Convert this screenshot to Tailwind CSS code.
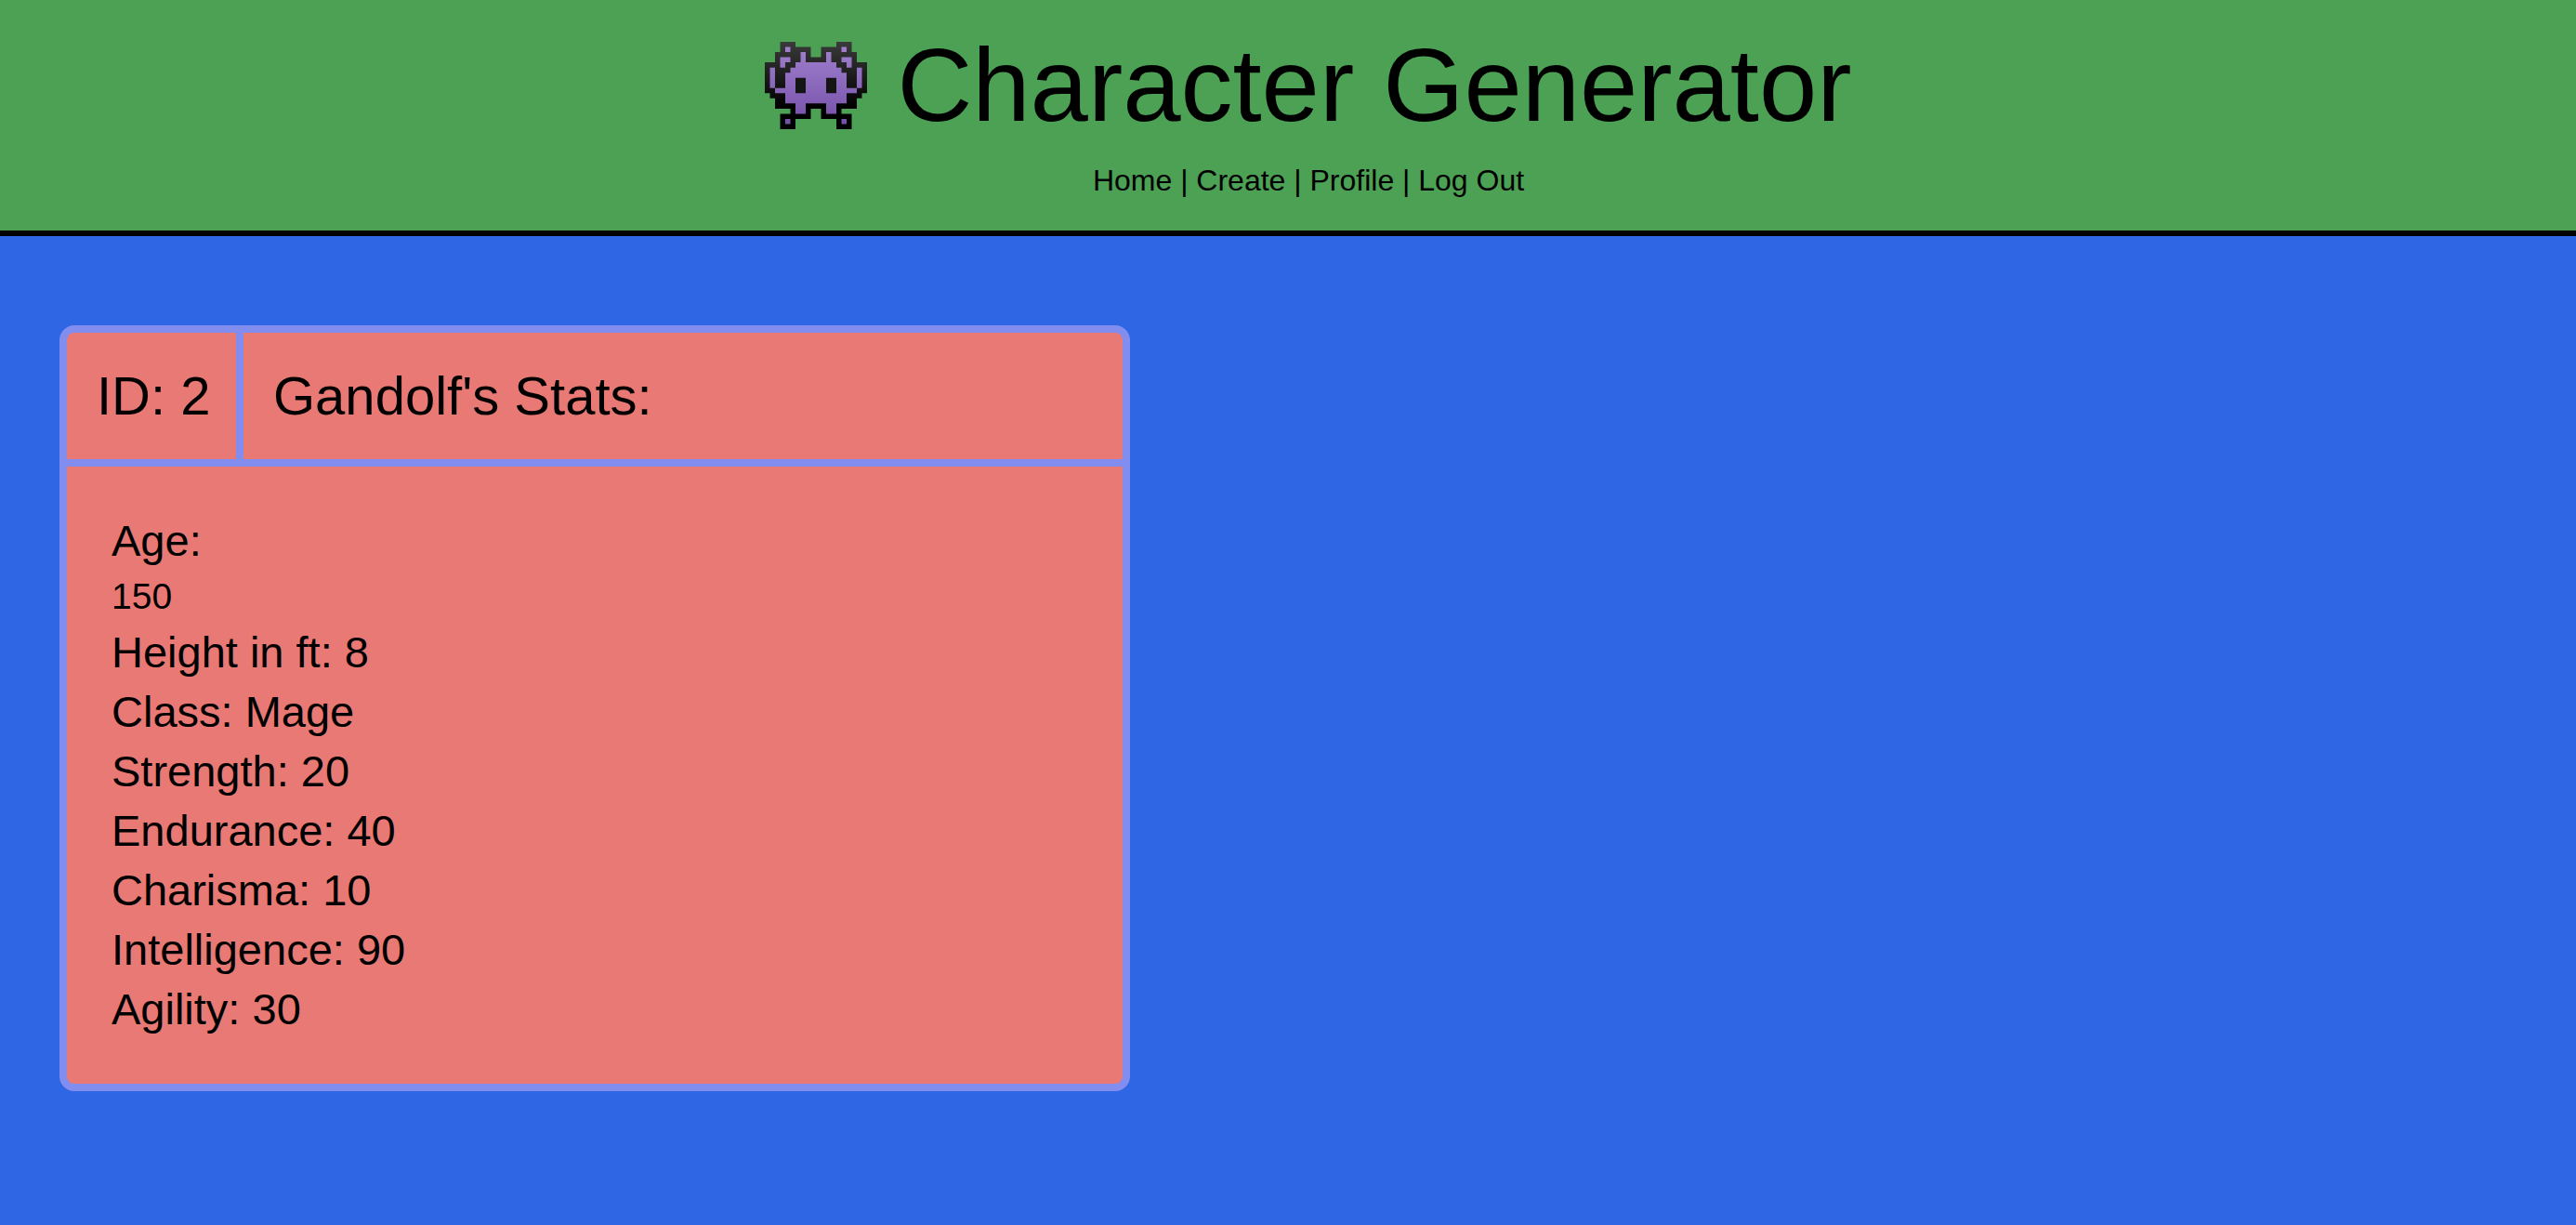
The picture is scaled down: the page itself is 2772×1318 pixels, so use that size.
<!DOCTYPE html>
<html lang="en">
<head>
<meta charset="utf-8">
<title>Character Generator</title>
<script src="https://cdn.jsdelivr.net/npm/@tailwindcss/browser@4"></script>
</head>
<body class="min-h-screen bg-[#2f66e4] font-['Liberation_Sans',Arial,sans-serif] text-black">
<header class="flex flex-col items-center gap-[18px] border-b-6 border-black bg-[#4ca154] pt-8 pb-[30px] pl-11">
  <h1 class="flex items-center gap-8 text-[112px] leading-[120px]">
    <svg class="h-[94px] w-[110px]" viewBox="0 0 20 17" preserveAspectRatio="none" aria-hidden="true">
      <defs>
        <linearGradient id="shell" x1="0" y1="0" x2="0" y2="1"><stop offset="0" stop-color="#3a3a3a"/><stop offset="0.75" stop-color="#000"/></linearGradient>
        <linearGradient id="skin" gradientUnits="userSpaceOnUse" x1="0" y1="1" x2="0" y2="16"><stop offset="0" stop-color="#a07fce"/><stop offset="1" stop-color="#7450a8"/></linearGradient>
      </defs>
      <path fill="url(#shell)" d="M3 0H6V1H9V3H11V1H14V0H17V2H18V4H20V10H19V11H18V13H15V14H17V17H14V15H11V13H9V15H6V17H3V14H5V13H2V11H1V10H0V4H2V2H3z"/>
      <path fill="url(#skin)" d="M4 1h1v1h-1zM15 1h1v1h-1zM3 3h2v1h-1v1h-1zM15 3h2v2h-1v-1h-1zM4 15h1v1h-1zM15 15h1v1h-1zM7 2H8V4H12V2H13V4H14V5H15V6H16V9H18V5H19V9H18V10H16V12H14V14H12V12H8V14H6V12H4V10H2V9H1V5H2V9H4V6H5V5H6V4H7z"/>
      <path fill="#151515" d="M6 7h2v3h-2zM12 7h2v3h-2z"/>
    </svg>
    <span>Character Generator</span>
  </h1>
  <nav class="text-[32px] leading-[48px]">
    <a href="#home">Home</a> | <a href="#create">Create</a> | <a href="#profile">Profile</a> | <a href="#logout">Log Out</a>
  </nav>
</header>
<main class="px-16 py-24">
  <article class="w-full max-w-6xl rounded-2xl border-8 border-[#818eef] bg-[#e87974]">
    <div class="flex border-b-8 border-[#818eef] text-[58px] leading-[72px]">
      <p class="w-[190px] shrink-0 border-r-8 border-[#818eef] py-8 pl-8 whitespace-nowrap">ID: 2</p>
      <h2 class="p-8">Gandolf's Stats:</h2>
    </div>
    <div class="p-12 text-[47px] leading-[64px]">
      <p>Age:</p>
      <p class="text-[39px] leading-[56px]">150</p>
      <p>Height in ft: 8</p>
      <p>Class: Mage</p>
      <p>Strength: 20</p>
      <p>Endurance: 40</p>
      <p>Charisma: 10</p>
      <p>Intelligence: 90</p>
      <p>Agility: 30</p>
    </div>
  </article>
</main>
</body>
</html>
